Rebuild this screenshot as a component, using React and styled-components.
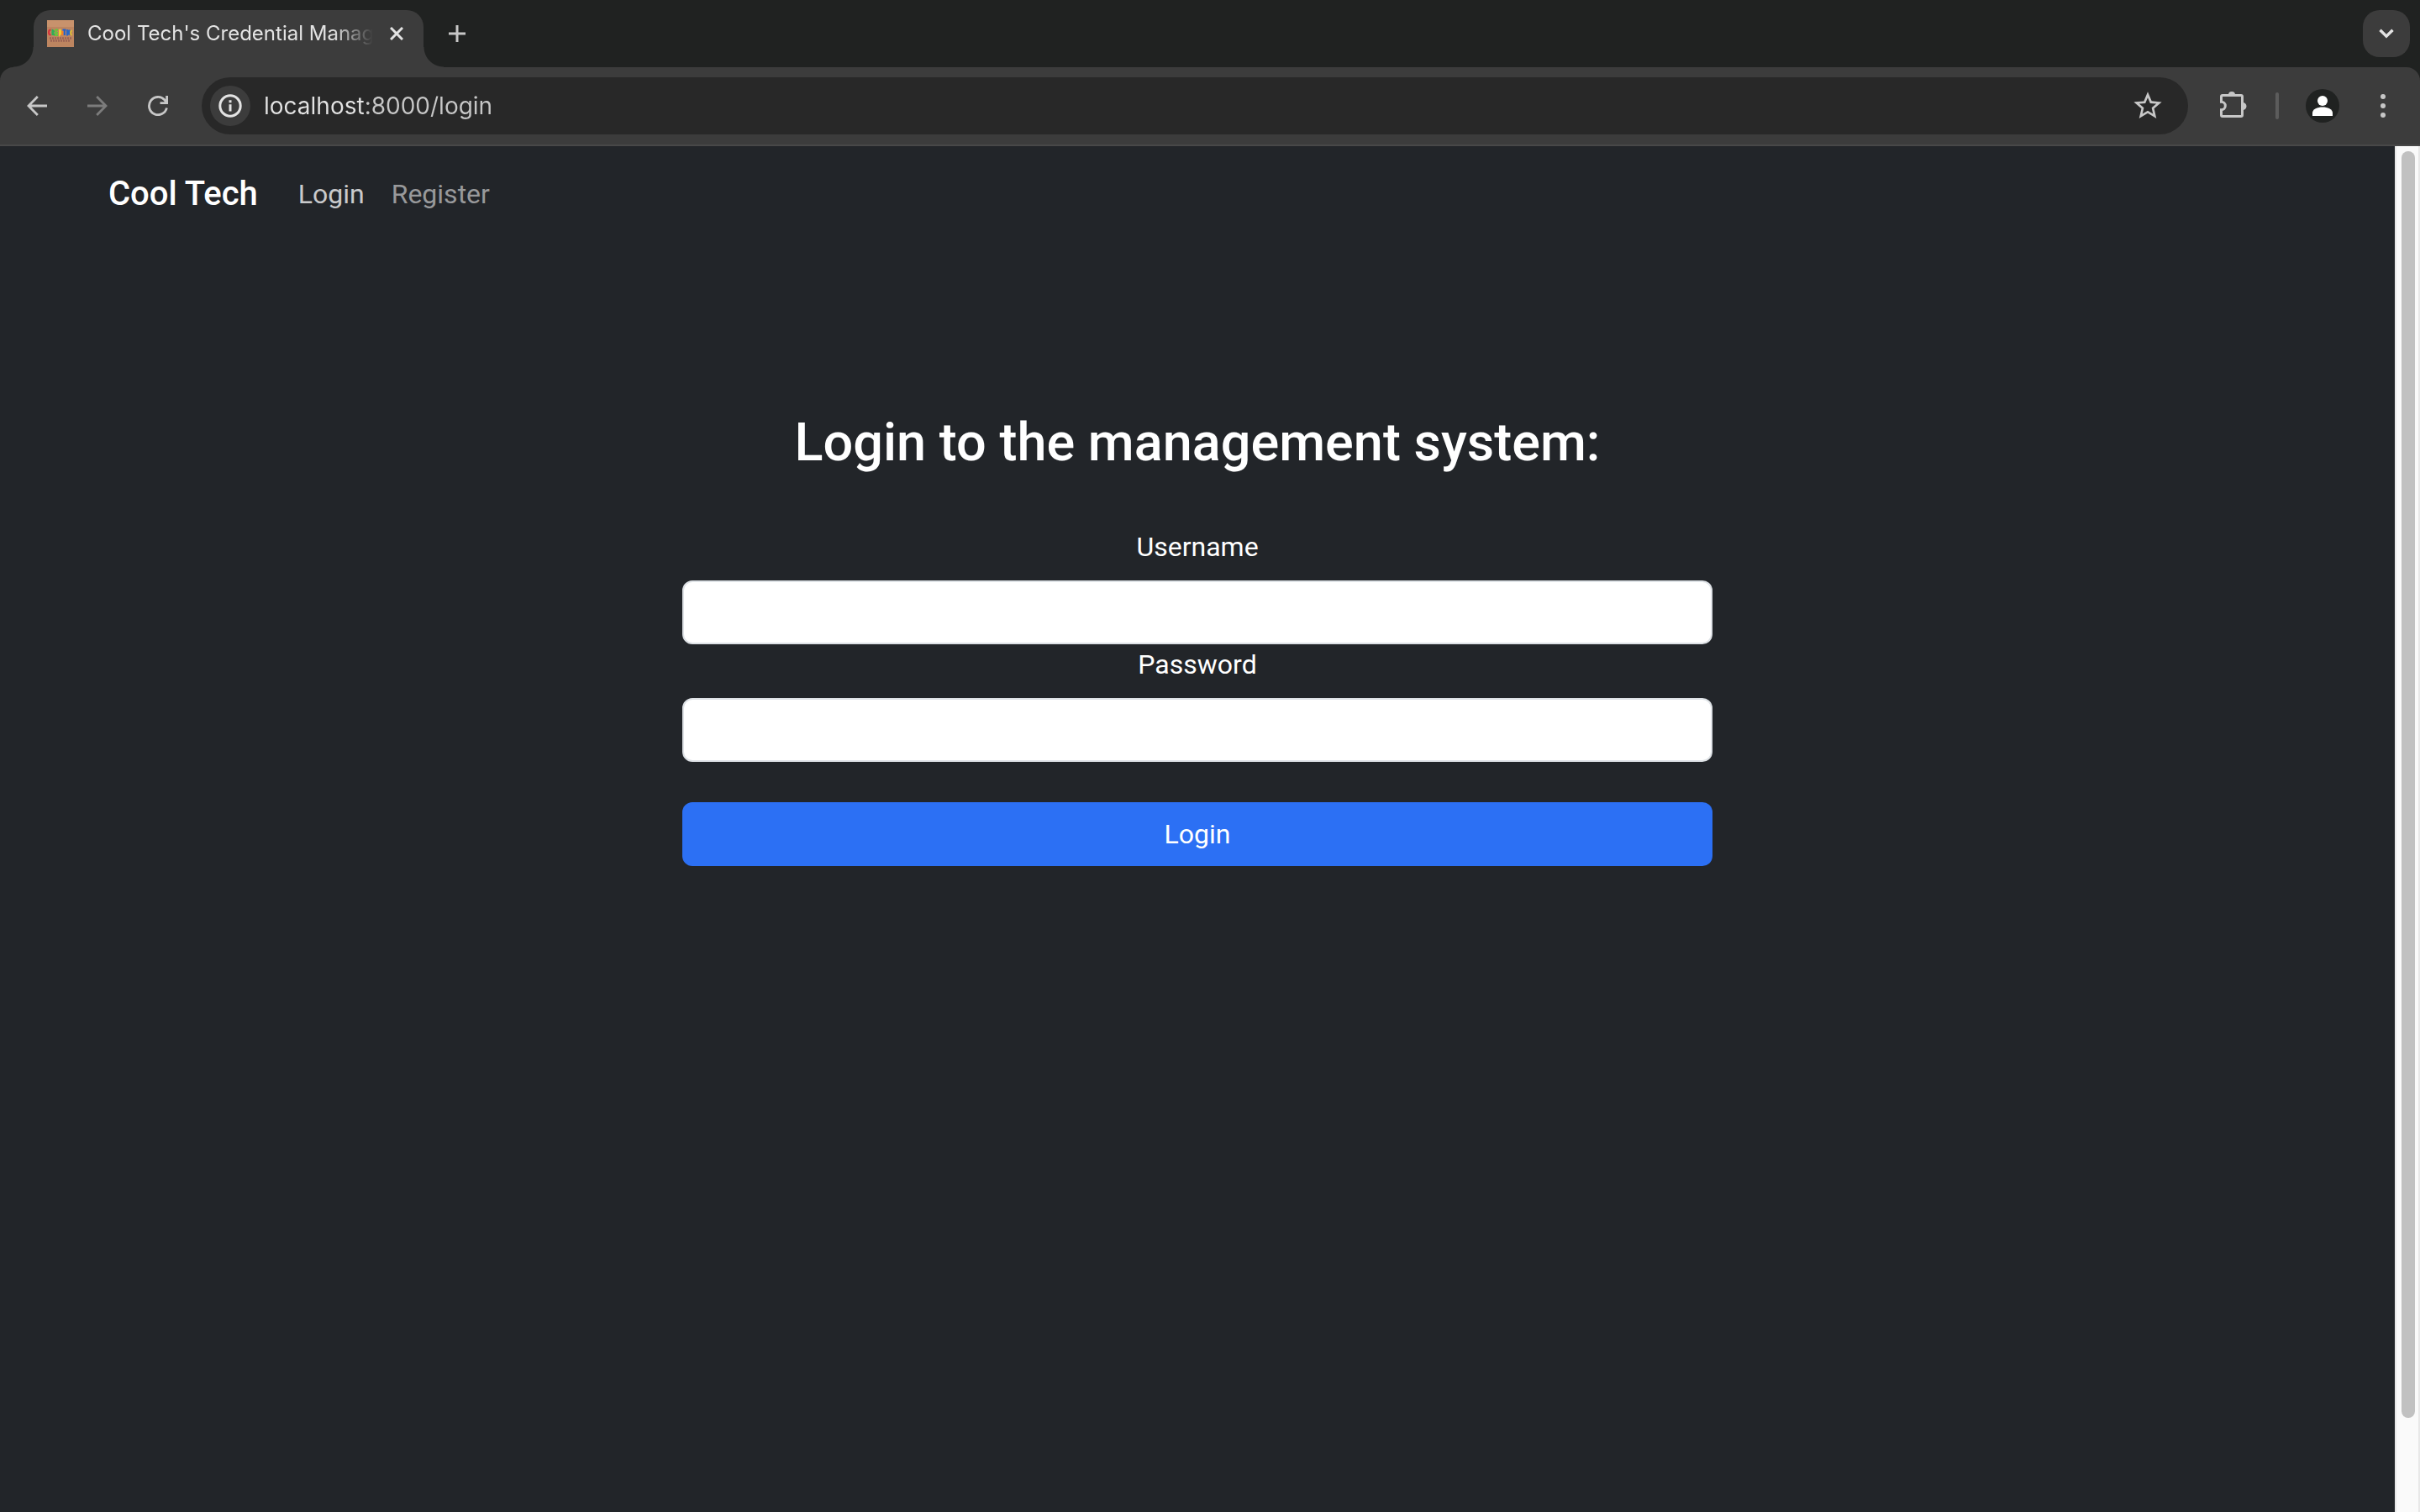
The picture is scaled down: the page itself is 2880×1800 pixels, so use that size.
import React from "react";
import styled, { createGlobalStyle } from "styled-components";

const GlobalStyle = createGlobalStyle`
  *, *::before, *::after { box-sizing: border-box; }
  body {
    margin: 0;
    background: #222529;
    font-family: Inter, "Liberation Sans", Arial, sans-serif;
  }
  button, input { font: inherit; }
`;

const Window = styled.div`
  display: flex;
  flex-direction: column;
  min-height: 100vh;
`;

/* ---------- Browser chrome ---------- */

const TabStrip = styled.header`
  display: flex;
  align-items: flex-end;
  height: 80px;
  padding: 0 12px 0 16px;
  background: #202221;
`;

const TabFlare = styled.span`
  width: 24px;
  height: 24px;
  background: radial-gradient(
    circle at ${(p) => (p.$side === "left" ? "0 0" : "100% 0")},
    transparent 23px,
    #3c3c3c 24px
  );
`;

const Tab = styled.div`
  display: flex;
  align-items: center;
  width: 464px;
  height: 68px;
  padding: 0 20px 12px 16px;
  border-radius: 20px 20px 0 0;
  background: #3c3c3c;
`;

const TabTitle = styled.span`
  flex: 1;
  margin: 0 16px;
  overflow: hidden;
  white-space: nowrap;
  font-size: 24px;
  line-height: 32px;
  color: #e3e3e3;
  mask-image: linear-gradient(to right, #000 86%, transparent 100%);
`;

const IconButton = styled.button`
  display: flex;
  flex: none;
  align-items: center;
  justify-content: center;
  width: ${(p) => p.$size}px;
  height: ${(p) => p.$size}px;
  padding: 0;
  border: 0;
  border-radius: ${(p) => p.$radius || "50%"};
  background: ${(p) => p.$fill || "transparent"};
  color: ${(p) => p.$color || "#c7c7c7"};
`;

const StripActions = styled.div`
  display: flex;
  flex: 1;
  align-items: center;
  justify-content: space-between;
  height: 56px;
  margin-bottom: 12px;
`;

const ToolbarFrame = styled.div`
  background: #202221;
`;

const Toolbar = styled.div`
  display: flex;
  align-items: center;
  height: 94px;
  padding: 0 12px 0 16px;
  border-bottom: 2px solid #484848;
  border-radius: 16px 16px 0 0;
  background: #3c3c3c;
`;

const NavButtons = styled.div`
  display: flex;
  gap: 16px;
  margin-right: 24px;
`;

const AddressBar = styled.div`
  display: flex;
  flex: 1;
  align-items: center;
  height: 68px;
  padding: 0 20px 0 10px;
  border-radius: 34px;
  background: #282828;
`;

const AddressInput = styled.input`
  flex: 1;
  min-width: 0;
  margin: 0 16px;
  padding: 0;
  border: 0;
  outline: 0;
  font-size: 28px;
  line-height: 40px;
  color: transparent;
  background: linear-gradient(to right, #e3e3e3 120px, #c7c7c7 120px);
  background-clip: text;
`;

const ToolbarActions = styled.div`
  display: flex;
  align-items: center;
  margin-left: 26px;
`;

const Divider = styled.span`
  width: 4px;
  height: 32px;
  margin: 0 24px 0 22px;
  border-radius: 2px;
  background: #5c5c5c;
`;

const AccountActions = styled.div`
  display: flex;
  align-items: center;
  gap: 12px;
`;

/* ---------- Page ---------- */

const Viewport = styled.div`
  display: flex;
  flex: 1;
`;

const Page = styled.div`
  flex: 1;
  background: #222529;
  font-family: Roboto, "Liberation Sans", Arial, sans-serif;
  color: #fff;
`;

const Navbar = styled.nav`
  display: flex;
  align-items: center;
  max-width: 2640px;
  height: 112px;
  margin: 0 auto;
  padding: 2px 24px 0;
`;

const Brand = styled.a`
  margin-right: 32px;
  font-size: 40px;
  font-weight: 500;
  line-height: 60px;
  color: #fff;
  text-decoration: none;
`;

const NavLink = styled.a`
  padding: 0 16px;
  font-size: 32px;
  line-height: 48px;
  color: ${(p) => (p.$active ? "#c9cacb" : "#98999b")};
  text-decoration: none;
`;

const LoginForm = styled.form`
  display: flex;
  flex-direction: column;
  width: 43%;
  margin: 0 auto;
  padding-top: 202px;
  text-align: center;
`;

const Heading = styled.h1`
  margin: 0 0 62px;
  font-size: 63px;
  font-weight: 500;
  line-height: 77px;
  white-space: nowrap;
`;

const Label = styled.label`
  margin-bottom: 16px;
  font-size: 32px;
  line-height: 48px;
`;

const TextBox = styled.input`
  width: 100%;
  height: 76px;
  padding: 12px 24px;
  border: 2px solid #dee2e6;
  border-radius: 12px;
  background: #fff;
  font-size: 32px;
  color: #212529;
`;

const SubmitButton = styled.button`
  height: 76px;
  margin-top: 48px;
  border: 0;
  border-radius: 12px;
  background: #2c70f4;
  font-size: 32px;
  line-height: 48px;
  color: #fff;
`;

const ScrollTrack = styled.div`
  display: flex;
  flex-direction: column;
  width: 30px;
  padding: 6px 4px 0 6px;
  border: solid #e8e8e8;
  border-width: 0 2px;
  background: #fafafa;
`;

const ScrollThumb = styled.div`
  flex: 27;
  width: 16px;
  border-radius: 8px;
  background: #c1c1c1;
`;

const ScrollRest = styled.div`
  flex: 2;
`;

/* ---------- Icons ---------- */

const Stroke = ({ w, h = w, sw = 3, children, ...rest }) => (
  <svg
    width={w}
    height={h}
    viewBox={`0 0 ${w} ${h}`}
    fill="none"
    stroke="currentColor"
    strokeWidth={sw}
    aria-hidden="true"
    {...rest}
  >
    {children}
  </svg>
);

const Favicon = () => (
  <svg width="32" height="32" viewBox="0 0 32 32" aria-hidden="true">
    <rect width="32" height="32" fill="#bd8560" />
    <rect width="32" height="8" fill="#c8926c" />
    <path d="M3 21.500h26M4 24.500h23" stroke="#8d5650" strokeWidth="2.5" strokeDasharray="2 1" opacity=".7" />
    <g fill="none" strokeWidth="2">
      <path d="M4.500 11.500a2.500 3 0 1 0 0 6" stroke="#d8313c" />
      <path d="M6.500 18v-6q3 1 0 3l2.500 3" stroke="#2fae57" />
      <path d="M13 11.500h-2.500v6.500H13M10.500 15H13" stroke="#62c83a" />
      <path d="M15 11v6.500q3-3 0-6.500" stroke="#f0cc2d" />
      <path d="M18 18v-5" stroke="#ef7f2a" />
      <path d="M18.500 11.500h4M20.800 11v7" stroke="#2360c8" />
      <path d="M24 18.500v-7l2.500 6v-6" stroke="#2767c9" />
      <path d="M30 12.500a2 2.500 0 1 0 0 5" stroke="#d9b838" />
    </g>
  </svg>
);

const CloseIcon = () => (
  <Stroke w={16}><path d="M1 1l14 14M15 1L1 15" /></Stroke>
);
const PlusIcon = () => (
  <Stroke w={20}><path d="M10 0v20M0 10h20" /></Stroke>
);
const ChevronIcon = () => (
  <Stroke w={18} h={12} sw={3.4}><path d="M1.500 1.800L9 9.200l7.500-7.400" /></Stroke>
);
const BackIcon = () => (
  <Stroke w={24} sw={2.8}><path d="M24 12H2M12.800 1L2 12l10.800 11" /></Stroke>
);
const ForwardIcon = () => (
  <Stroke w={24} sw={2.8}><path d="M0 12h22M11.200 1L22 12 11.200 23" /></Stroke>
);
const ReloadIcon = () => (
  <Stroke w={24} sw={2.8}>
    <path d="M22.400 14.500A10.600 10.600 0 1 1 19.800 4.800L22.500 8.300M22.600 0v8.700H14.500" />
  </Stroke>
);
const InfoIcon = () => (
  <Stroke w={28}>
    <circle cx="14" cy="14" r="12.200" />
    <path d="M14 12.200v8.300M14 7.200v3" />
  </Stroke>
);
const StarIcon = () => (
  <svg width="40" height="40" viewBox="0 0 24 24" fill="currentColor" aria-hidden="true">
    <path d="M22 9.240l-7.190-.620L12 2 9.190 8.630 2 9.240l5.460 4.730L5.820 21 12 17.270 18.180 21l-1.630-7.030L22 9.240zM12 15.400l-3.760 2.270 1-4.280-3.320-2.880 4.380-.380L12 6.100l1.710 4.040 4.380.380-3.320 2.880 1 4.280L12 15.400z" />
  </svg>
);
const PuzzleIcon = () => (
  <Stroke w={32} h={36}>
    <path
      d="M1.500 13.300V7q0-1.500 1.500-1.500h22q1.500 0 1.500 1.500v22q0 1.500-1.500 1.500H3q-1.500 0-1.500-1.500v-6.300a4.800 4.700 0 0 0 0-9.400z"
    />
    <path d="M10 5a4 4 0 0 1 8 0zM27 14a4 4 0 0 1 0 9z" fill="currentColor" stroke="none" />
  </Stroke>
);
const PersonIcon = () => (
  <svg width="40" height="40" viewBox="0 0 40 40" aria-hidden="true">
    <circle cx="20" cy="20" r="20" fill="#202221" />
    <circle cx="20" cy="14" r="6" fill="#fff" />
    <path d="M8 32v-3.500c0-4.500 6-7 12-7s12 2.500 12 7V32z" fill="#fff" />
  </svg>
);
const DotsIcon = () => (
  <svg width="6" height="28" viewBox="0 0 6 28" fill="currentColor" aria-hidden="true">
    <circle cx="3" cy="3" r="3" />
    <circle cx="3" cy="14" r="3" />
    <circle cx="3" cy="25" r="3" />
  </svg>
);

export default function App() {
  return (
    <Window>
      <GlobalStyle />
      <TabStrip>
        <TabFlare $side="left" />
        <Tab>
          <Favicon />
          <TabTitle>Cool Tech's Credential Manag</TabTitle>
          <IconButton $size={24} $color="#e3e3e3" aria-label="Close tab"><CloseIcon /></IconButton>
        </Tab>
        <TabFlare $side="right" />
        <StripActions>
          <IconButton $size={32} aria-label="New tab"><PlusIcon /></IconButton>
          <IconButton $size={56} $radius="20px" $fill="#3c3c3c" $color="#e3e3e3" aria-label="Search tabs">
            <ChevronIcon />
          </IconButton>
        </StripActions>
      </TabStrip>
      <ToolbarFrame>
        <Toolbar>
          <NavButtons>
            <IconButton $size={56} aria-label="Back"><BackIcon /></IconButton>
            <IconButton $size={56} $color="#7c7c7c" aria-label="Forward"><ForwardIcon /></IconButton>
            <IconButton $size={56} aria-label="Reload"><ReloadIcon /></IconButton>
          </NavButtons>
          <AddressBar>
            <IconButton $size={48} $fill="#3c3c3c" $color="#e3e3e3" aria-label="Site information">
              <InfoIcon />
            </IconButton>
            <AddressInput aria-label="Address" defaultValue="localhost:8000/login" />
            <IconButton $size={56} aria-label="Bookmark this page"><StarIcon /></IconButton>
          </AddressBar>
          <ToolbarActions>
            <IconButton $size={56} aria-label="Extensions"><PuzzleIcon /></IconButton>
            <Divider />
            <AccountActions>
              <IconButton $size={56} aria-label="Profile"><PersonIcon /></IconButton>
              <IconButton $size={64} aria-label="Menu"><DotsIcon /></IconButton>
            </AccountActions>
          </ToolbarActions>
        </Toolbar>
      </ToolbarFrame>
      <Viewport>
        <Page>
          <Navbar>
            <Brand href="#">Cool Tech</Brand>
            <NavLink href="#login" $active>Login</NavLink>
            <NavLink href="#register">Register</NavLink>
          </Navbar>
          <LoginForm>
            <Heading>Login to the management system:</Heading>
            <Label htmlFor="username">Username</Label>
            <TextBox id="username" type="text" />
            <Label htmlFor="password">Password</Label>
            <TextBox id="password" type="password" />
            <SubmitButton type="button">Login</SubmitButton>
          </LoginForm>
        </Page>
        <ScrollTrack>
          <ScrollThumb />
          <ScrollRest />
        </ScrollTrack>
      </Viewport>
    </Window>
  );
}
